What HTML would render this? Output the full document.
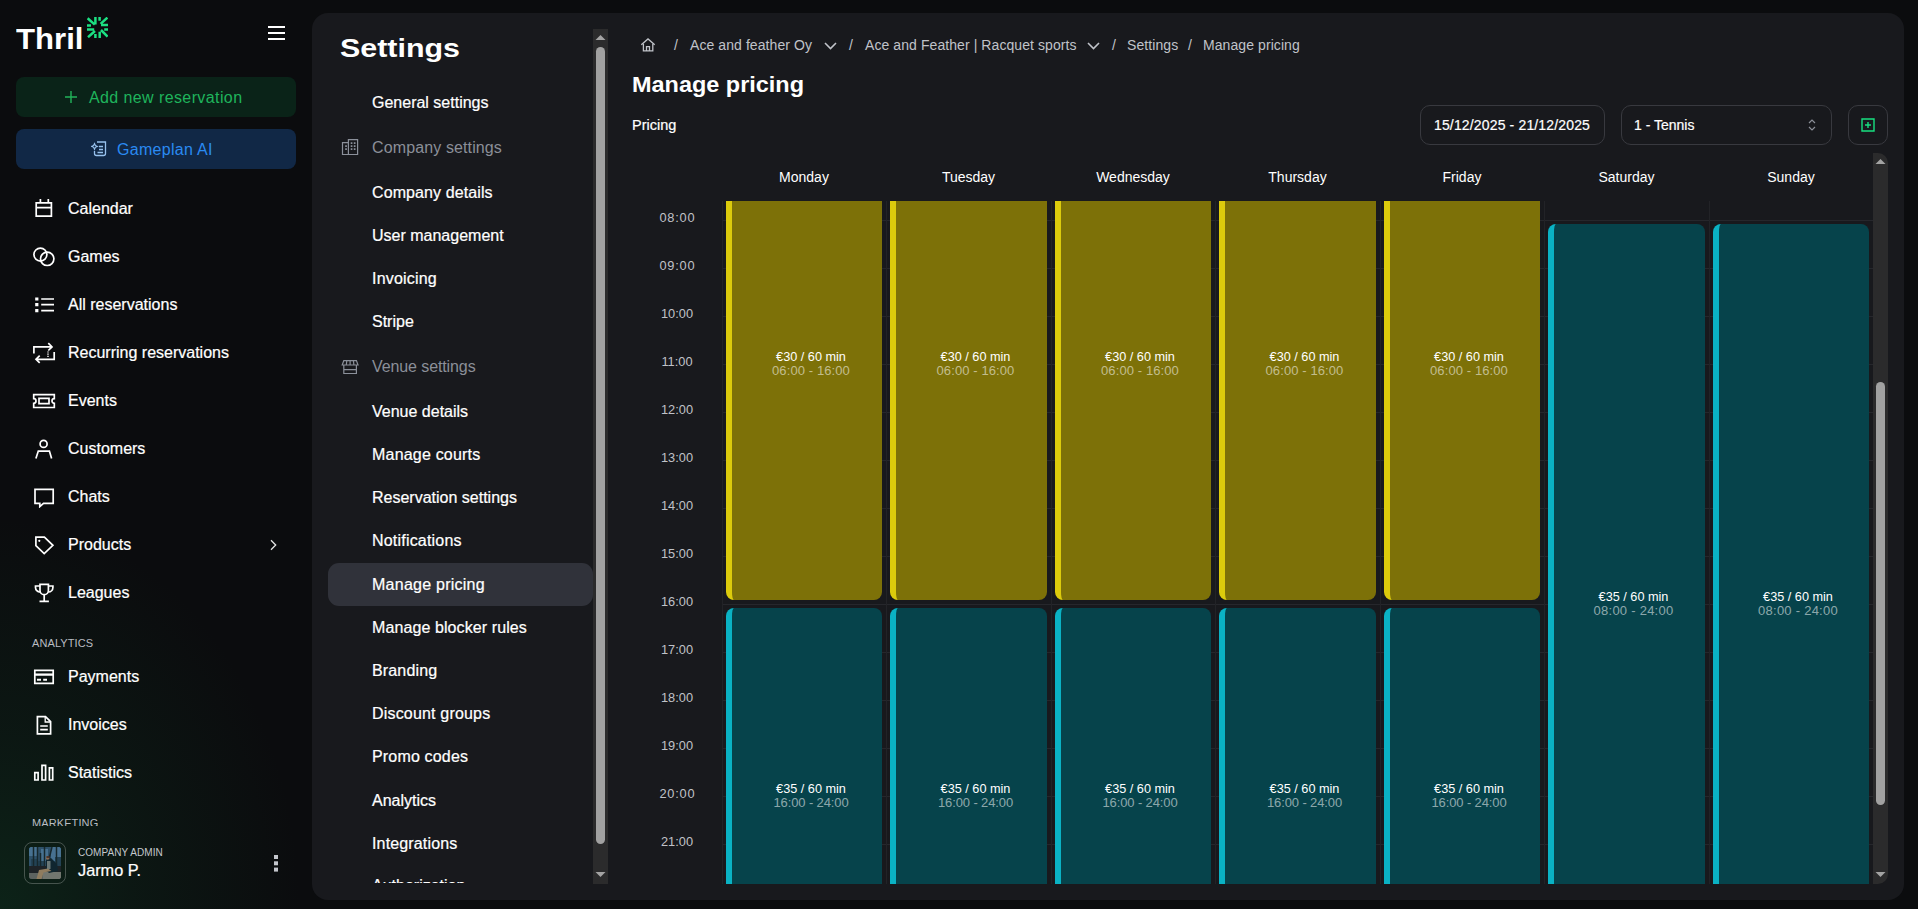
<!DOCTYPE html><html lang="en"><head><meta charset="utf-8"><title>Manage pricing</title><style>
*{box-sizing:border-box;margin:0;padding:0}
html,body{width:1918px;height:909px;overflow:hidden;background:#0b0c0e;}
body{font-family:"Liberation Sans",sans-serif;color:#fff;position:relative;-webkit-font-smoothing:antialiased}
.abs{position:absolute}
.t{position:absolute;white-space:nowrap;line-height:1;}
#glow{position:absolute;left:0;top:0;width:312px;height:909px;background:radial-gradient(ellipse 300px 390px at 0px 909px, rgba(14,66,38,.42), rgba(14,66,38,.2) 45%, rgba(11,12,14,0) 100%);}
#panel{position:absolute;left:312px;top:13px;width:1592px;height:887px;background:#18191d;border-radius:16px;}
.nav{position:absolute;left:68px;font-size:16px;color:#fff;white-space:nowrap;line-height:20px;height:20px;-webkit-text-stroke:.22px #fff}
.navi{position:absolute;left:32px;width:24px;height:24px}
.sec{position:absolute;left:32px;font-size:11px;color:#b9bcc2;letter-spacing:.1px;line-height:12px;white-space:nowrap}
.si{position:absolute;left:372px;font-size:16px;color:#fff;white-space:nowrap;line-height:20px;height:20px;-webkit-text-stroke:.22px #fff}
.sg{position:absolute;left:372px;font-size:16px;color:#8b8f98;white-space:nowrap;line-height:20px;height:20px}
.bc{position:absolute;top:37px;font-size:14px;line-height:16px;color:#c0c3c9;white-space:nowrap;letter-spacing:.08px}
.day{position:absolute;top:169px;width:164px;text-align:center;font-size:14px;line-height:16px;color:#fff;white-space:nowrap}
.hr{position:absolute;left:647px;width:60px;text-align:center;font-size:12.800px;line-height:16px;color:#c0c2c8;white-space:nowrap}
.hl{position:absolute;left:722px;width:1152px;height:1px;background:#26272c}
.vl{position:absolute;top:201px;width:1px;height:683px;background:#222327}
.blk{position:absolute;width:156px;overflow:hidden}
.blk.y{background:#7d7108;border-left:6px solid #dccb0c}
.blk.c{background:#06434b;border-left:6px solid #0ab2c4}
.bt{position:absolute;width:164px;text-align:center;font-size:13px;line-height:14px;white-space:nowrap}
.bt b{font-weight:400;color:#fff;display:block;font-size:12.700px}
.bt i{font-style:normal;color:rgba(255,255,255,.55);display:block;letter-spacing:.3px}
</style></head><body>
<div id="glow"></div>
<div class="t" style="left:16px;top:23px;font-size:29.5px;font-weight:700;line-height:32px;transform-origin:0 50%;transform:scaleX(1.055)">Thril</div>
<svg class="abs" style="left:87px;top:17px" width="21" height="21" viewBox="0 0 21 21" fill="none" stroke="#1ce182" stroke-width="2.500">
<path d="M0.600 1.300L7.800 7.600M8.400 0v7.600M0 8.600h4"/><path d="M20.400 0.600L13.600 6.800M14 8.100h7M12.600 0v3.700"/><path d="M20.600 19.600L14 13M12.700 14.800V21M17.200 12.600H21"/><path d="M1 20.200L8 14M0 12.600h7.200M8.400 17v4"/></svg>
<div class="abs" style="left:267.5px;top:25.800px;width:17px;height:2.400px;background:#fff;box-shadow:0 6px 0 #fff,0 12px 0 #fff"></div>
<div class="abs" style="left:16px;top:77px;width:280px;height:40px;border-radius:8px;background:#0a2318"></div>
<div class="t" style="left:89px;top:89px;font-size:16px;line-height:18px;color:#1fb45c;letter-spacing:.4px">Add new reservation</div>
<svg class="abs" style="left:64px;top:90px" width="14" height="14" viewBox="0 0 14 14" stroke="#22b45a" stroke-width="1.4" fill="none"><path d="M7 1v12M1 7h12"/></svg>
<div class="abs" style="left:16px;top:129px;width:280px;height:40px;border-radius:8px;background:#112846"></div>
<div class="t" style="left:117px;top:141px;font-size:16px;line-height:18px;color:#2a8af2;letter-spacing:.3px">Gameplan AI</div>
<svg class="abs" style="left:91px;top:140px" width="17" height="17" viewBox="0 0 17 17" fill="none" stroke="#97c1ed" stroke-width="1.3">
<path d="M6 2h8.5v11.5a2 2 0 0 1-2 2H5.5a2 2 0 0 1-2-2V11"/><path d="M8 6.5h4M8 9.5h4M6.5 12.5h5.5"/><path d="M3.5 3.5l.9 2 2 .9-2 .9-.9 2-.9-2-2-.9 2-.9z" stroke-width="1.1"/></svg>
<svg class="navi" style="top:196px" viewBox="0 0 24 24" fill="none" stroke="#fff" stroke-width="1.7"><path d="M4.2 6.8h15.2v13.4H4.2z"/><path d="M4.2 11.6h15.2M8.4 3v4M16.3 3v4"/></svg>
<div class="nav" style="top:199px">Calendar</div>
<svg class="navi" style="top:244px" viewBox="0 0 24 24" fill="none" stroke="#fff" stroke-width="1.7"><circle cx="8.4" cy="10.6" r="6.5"/><circle cx="15.2" cy="14.8" r="6.7"/></svg>
<div class="nav" style="top:247px">Games</div>
<svg class="navi" style="top:292px" viewBox="0 0 24 24" fill="none" stroke="#fff" stroke-width="1.7"><path d="M9.2 7h12.8M9.2 12.6h12.8M9.2 18.6h12.8"/><path d="M3.2 5.4h3.2v3.2H3.2zM3.2 11h3.2v3.2H3.2zM3.2 17h3.2v3.2H3.2z" fill="#fff" stroke="none"/></svg>
<div class="nav" style="top:295px">All reservations</div>
<svg class="navi" style="top:340px" viewBox="0 0 24 24" fill="none" stroke="#fff" stroke-width="1.7"><path d="M1.9 13.6V6.9h17.6M16.3 3.1l3.7 3.8-3.7 3.6"/><path d="M22.2 12.1v7.2H4.5M7.7 15.7l-3.7 3.6 3.7 3.6"/><path d="M16 11.4v5.8" stroke-dasharray="1.2 1" stroke-width="1.4"/></svg>
<div class="nav" style="top:343px">Recurring reservations</div>
<svg class="navi" style="top:388px" viewBox="0 0 24 24" fill="none" stroke="#fff" stroke-width="1.7"><path d="M1.7 6.7h20.6v4a2.3 2.3 0 0 0 0 4.6v4.2H1.7v-4.200a2.3 2.3 0 0 0 0-4.600z"/><path d="M7 10.300h10v5.400H7z"/></svg>
<div class="nav" style="top:391px">Events</div>
<svg class="navi" style="top:436px" viewBox="0 0 24 24" fill="none" stroke="#fff" stroke-width="1.7"><circle cx="11.600" cy="7.900" r="3.500"/><path d="M3.900 22.600l2.400-7.500h11.100l2.200 7.500"/></svg>
<div class="nav" style="top:439px">Customers</div>
<svg class="navi" style="top:484px" viewBox="0 0 24 24" fill="none" stroke="#fff" stroke-width="1.7"><path d="M3 5.400h18.200v13.900h-9.700l-3.700 3.300v-3.300H3z"/></svg>
<div class="nav" style="top:487px">Chats</div>
<svg class="navi" style="top:532px" viewBox="0 0 24 24" fill="none" stroke="#fff" stroke-width="1.7"><path d="M3.900 5.200h8.500l8.500 8.100-8.700 8.300-8.300-8z"/><circle cx="7.300" cy="8.800" r="1.100" fill="#fff" stroke="none"/></svg>
<div class="nav" style="top:535px">Products</div>
<svg class="navi" style="top:580px" viewBox="0 0 24 24" fill="none" stroke="#fff" stroke-width="1.7"><path d="M8 4.300h8.400v6.200a4.200 4.200 0 0 1-8.400 0z"/><path d="M8 6H3.500v1.500a4.500 4.500 0 0 0 4.500 4.500M16.400 6h4.500v1.500a4.500 4.500 0 0 1-4.500 4.500M12.200 14.900V21M7.500 21.300h9.400"/></svg>
<div class="nav" style="top:583px">Leagues</div>
<svg class="navi" style="top:664px" viewBox="0 0 24 24" fill="none" stroke="#fff" stroke-width="1.7"><path d="M2.800 6.400h18.400v13H2.800z"/><path d="M2.800 10.600h18.400" stroke-width="2.300"/><path d="M5 15.700h4M11.200 15.700h3.800" stroke-width="2"/></svg>
<div class="nav" style="top:667px">Payments</div>
<svg class="navi" style="top:712px" viewBox="0 0 24 24" fill="none" stroke="#fff" stroke-width="1.7"><path d="M5.400 4.600h8.100l5.100 5.100v12.200H5.400z"/><path d="M13.200 4.800v5.200h5.200" stroke-width="1.300"/><path d="M8.200 14h7.600M8.200 17.600h7.600"/></svg>
<div class="nav" style="top:715px">Invoices</div>
<svg class="navi" style="top:760px" viewBox="0 0 24 24" fill="none" stroke="#fff" stroke-width="1.7"><path d="M2.800 12.700h3.300V20H2.800zM10 5.300h3.600V20H10zM17.400 7.800h3.300V20h-3.300z"/></svg>
<div class="nav" style="top:763px">Statistics</div>
<svg class="abs" style="left:266.500px;top:539px" width="12" height="12" viewBox="0 0 12 12" fill="none" stroke="#e6e6e6" stroke-width="1.300"><path d="M4 1.300l4.700 4.700L4 10.700"/></svg>
<div class="sec" style="top:637px">ANALYTICS</div>
<div class="abs" style="left:32px;top:817px;height:8.6px;overflow:hidden"><div class="sec" style="position:static">MARKETING</div></div>
<div class="abs" style="left:24px;top:842px;width:42px;height:42px;border-radius:8px;border:1px solid rgba(255,255,255,.24)"></div>
<svg class="abs" style="left:29px;top:847px;border-radius:3px" width="32" height="32" viewBox="0 0 32 32">
<rect width="32" height="32" fill="#3c6787"/>
<path d="M0 0h9v9H0zM12 2h7v12h-7zM22 0h10v14H22z" fill="#5f94bd"/>
<path d="M2 12h6v8H2zM9 14h6v6H9zM26 10h6v9h-6z" fill="#2d5269"/>
<path d="M4.500 0v22M8.500 0v21M15.500 0v22M11.500 6v15M27.500 0v20M23 0l-3 12" stroke="#1c2e33" stroke-width="1.500" fill="none"/>
<rect y="19" width="32" height="13" fill="#26282a"/>
<path d="M0 26h32v6H0z" fill="#7d8079"/><path d="M14 25h18v7H14z" fill="#9a9a8e"/>
<path d="M17 12.500l5-1.500 6 6 1 7-9 2-3-3z" fill="#122c36"/>
<path d="M18 14h3.500v8H18z" fill="#8f9c98"/>
<circle cx="18.700" cy="10.800" r="1.900" fill="#b88a6b"/><path d="M17.500 9.200h3.500v1.500h-3.500z" fill="#4f2c1e"/>
<path d="M19 21.500l-9 1.500-2.500 9h5l2-6.500 8-1.500z" fill="#c2a278"/>
<rect width="32" height="32" fill="#0a1a22" fill-opacity=".28"/>
</svg>
<div class="t" style="left:78px;top:847px;font-size:10px;line-height:12px;color:#c5c8cd;letter-spacing:.05px">COMPANY ADMIN</div>
<div class="t" style="left:78px;top:860px;font-size:16.3px;line-height:20px;color:#fff;-webkit-text-stroke:.22px #fff">Jarmo P.</div>
<div class="abs" style="left:274px;top:855px;width:4px;height:4px;background:#c4c6cc;box-shadow:0 6.3px 0 #c4c6cc,0 12.6px 0 #c4c6cc"></div>
<div id="panel"></div>
<div class="t" style="left:340px;top:32px;font-size:26px;font-weight:700;line-height:32px;transform-origin:0 50%;transform:scaleX(1.17)">Settings</div>
<div class="abs" style="left:328px;top:563px;width:265px;height:43px;border-radius:11px;background:#30323a"></div>
<div class="si" style="top:93px">General settings</div>
<div class="sg" style="top:138px;letter-spacing:0.12px">Company settings</div>
<div class="si" style="top:183px;letter-spacing:0.1px">Company details</div>
<div class="si" style="top:226px">User management</div>
<div class="si" style="top:269px;letter-spacing:0.2px">Invoicing</div>
<div class="si" style="top:312px">Stripe</div>
<div class="sg" style="top:357px;letter-spacing:-0.1px">Venue settings</div>
<div class="si" style="top:402px">Venue details</div>
<div class="si" style="top:445px;letter-spacing:0.2px">Manage courts</div>
<div class="si" style="top:488px">Reservation settings</div>
<div class="si" style="top:531px;letter-spacing:0.2px">Notifications</div>
<div class="si" style="top:575px;letter-spacing:0.25px">Manage pricing</div>
<div class="si" style="top:618px;letter-spacing:0.1px">Manage blocker rules</div>
<div class="si" style="top:661px;letter-spacing:0.15px">Branding</div>
<div class="si" style="top:704px;letter-spacing:0.18px">Discount groups</div>
<div class="si" style="top:747px;letter-spacing:0.17px">Promo codes</div>
<div class="si" style="top:791px">Analytics</div>
<div class="si" style="top:834px;letter-spacing:0.15px">Integrations</div>
<div class="abs" style="left:372px;top:876px;height:6.600px;overflow:hidden"><div class="si" style="position:static">Authorization</div></div>
<svg class="abs" style="left:341px;top:139px" width="18" height="17" viewBox="0 0 18 17" fill="none" stroke="#8b909a" stroke-width="1.200"><path d="M1.500 3.600h5.900v11.900H1.500zM7.400 0.600h9.200v14.900H7.400z"/><path d="M4.200 7.100h1.700M4.200 10.100h1.700M9.700 4.100h1.700M12.800 4.100h1.700M9.700 7.100h1.700M12.800 7.100h1.700M9.700 10.100h1.700M12.800 10.100h1.700" stroke-width="1.800"/></svg>
<svg class="abs" style="left:341px;top:359px" width="18" height="16" viewBox="0 0 18 16" fill="none" stroke="#8b909a" stroke-width="1.200"><path d="M2.800 1.600h12.600L17 6H1.200z"/><path d="M2.800 6v8.500h12.600V6M2.800 10.600h12.600"/><path d="M5.800 1.600L5.300 6M9.100 1.600V6M12.400 1.600l.5 4.400"/></svg>
<div class="abs" style="left:593px;top:29px;width:15px;height:855px;background:#2b2b2c"></div>
<div class="abs" style="left:596px;top:47px;width:9px;height:797px;border-radius:5px;background:#a1a1a1"></div>
<svg class="abs" style="left:595px;top:34px" width="11" height="7" viewBox="0 0 11 7"><path d="M0.5 6L5.5 1l5 5z" fill="#a3a3a3"/></svg>
<svg class="abs" style="left:595px;top:871px" width="11" height="7" viewBox="0 0 11 7"><path d="M0.5 1L5.5 6l5-5z" fill="#a3a3a3"/></svg>
<svg class="abs" style="left:640px;top:37px" width="16" height="16" viewBox="0 0 16 16" fill="none" stroke="#c0c3c9" stroke-width="1.300"><path d="M1.300 7.800L8 1.900l6.700 5.900"/><path d="M3.400 6.800v7.100h9.400V6.800"/><path d="M6.500 13.900V9.700h3v4.200"/></svg>
<div class="bc" style="left:674px">/</div>
<div class="bc" style="left:690px">Ace and feather Oy</div>
<div class="bc" style="left:849px">/</div>
<div class="bc" style="left:865px">Ace and Feather | Racquet sports</div>
<div class="bc" style="left:1112px">/</div>
<div class="bc" style="left:1127px">Settings</div>
<div class="bc" style="left:1188px">/</div>
<div class="bc" style="left:1203px">Manage pricing</div>
<svg class="abs" style="left:824px;top:41.700px" width="13" height="8" viewBox="0 0 13 8" fill="none" stroke="#c0c3c9" stroke-width="1.600"><path d="M1 1l5.5 5.5L12 1"/></svg>
<svg class="abs" style="left:1087px;top:41.700px" width="13" height="8" viewBox="0 0 13 8" fill="none" stroke="#c0c3c9" stroke-width="1.600"><path d="M1 1l5.5 5.5L12 1"/></svg>
<div class="t" style="left:632px;top:71px;font-size:22px;font-weight:700;line-height:28px;transform-origin:0 50%;transform:scaleX(1.066)">Manage pricing</div>
<div class="t" style="left:632px;top:116px;font-size:14.5px;line-height:18px;-webkit-text-stroke:.2px #fff">Pricing</div>
<div class="abs" style="left:1420px;top:105px;width:185px;height:40px;border:1px solid #38393f;border-radius:10px"></div>
<div class="t" style="left:1434px;top:116px;font-size:14px;line-height:18px;letter-spacing:.15px;-webkit-text-stroke:.2px #fff">15/12/2025 - 21/12/2025</div>
<div class="abs" style="left:1621px;top:105px;width:211px;height:40px;border:1px solid #38393f;border-radius:10px"></div>
<div class="t" style="left:1634px;top:116px;font-size:14px;line-height:18px;-webkit-text-stroke:.2px #fff">1 - Tennis</div>
<svg class="abs" style="left:1807px;top:118px" width="10" height="14" viewBox="0 0 10 14" fill="none" stroke="#8b8f98" stroke-width="1.2"><path d="M2 5l3-3 3 3M2 9l3 3 3-3"/></svg>
<div class="abs" style="left:1848px;top:105px;width:40px;height:40px;border:1px solid #38393f;border-radius:10px"></div>
<svg class="abs" style="left:1861px;top:118px" width="14" height="14" viewBox="0 0 14 14" fill="none" stroke="#17e080" stroke-width="1.400"><path d="M1 1h12v12H1z"/><path d="M7 4v6M4 7h6"/></svg>
<div class="day" style="left:722.0px">Monday</div>
<div class="day" style="left:886.5px">Tuesday</div>
<div class="day" style="left:1051.0px">Wednesday</div>
<div class="day" style="left:1215.5px">Thursday</div>
<div class="day" style="left:1380.0px">Friday</div>
<div class="day" style="left:1544.5px">Saturday</div>
<div class="day" style="left:1709.0px">Sunday</div>
<div class="hl" style="top:220px"></div>
<div class="hl" style="top:268px"></div>
<div class="hl" style="top:316px"></div>
<div class="hl" style="top:364px"></div>
<div class="hl" style="top:412px"></div>
<div class="hl" style="top:460px"></div>
<div class="hl" style="top:508px"></div>
<div class="hl" style="top:556px"></div>
<div class="hl" style="top:604px"></div>
<div class="hl" style="top:652px"></div>
<div class="hl" style="top:700px"></div>
<div class="hl" style="top:748px"></div>
<div class="hl" style="top:796px"></div>
<div class="hl" style="top:844px"></div>
<div class="vl" style="left:722px"></div>
<div class="vl" style="left:886px"></div>
<div class="vl" style="left:1051px"></div>
<div class="vl" style="left:1215px"></div>
<div class="vl" style="left:1380px"></div>
<div class="vl" style="left:1544px"></div>
<div class="vl" style="left:1709px"></div>
<div class="vl" style="left:1873px"></div>
<div class="hr" style="top:210px;letter-spacing:.8px;text-indent:.8px">08:00</div>
<div class="hr" style="top:258px;letter-spacing:.8px;text-indent:.8px">09:00</div>
<div class="hr" style="top:306px">10:00</div>
<div class="hr" style="top:354px">11:00</div>
<div class="hr" style="top:402px">12:00</div>
<div class="hr" style="top:450px">13:00</div>
<div class="hr" style="top:498px">14:00</div>
<div class="hr" style="top:546px">15:00</div>
<div class="hr" style="top:594px">16:00</div>
<div class="hr" style="top:642px">17:00</div>
<div class="hr" style="top:690px">18:00</div>
<div class="hr" style="top:738px">19:00</div>
<div class="hr" style="top:786px;letter-spacing:.8px;text-indent:.8px">20:00</div>
<div class="hr" style="top:834px">21:00</div>
<div class="blk y" style="left:726px;width:156px;top:201px;height:399px;border-radius:0 0 8px 8px"></div>
<div class="bt" style="left:729.0px;top:350px"><b>€30 / 60 min</b><i style="letter-spacing:.1px">06:00 - 16:00</i></div>
<div class="blk c" style="left:726px;width:156px;top:608px;height:276px;border-radius:8px 8px 0 0"></div>
<div class="bt" style="left:729.0px;top:782px"><b>€35 / 60 min</b><i style="letter-spacing:-.12px">16:00 - 24:00</i></div>
<div class="blk y" style="left:890px;width:157px;top:201px;height:399px;border-radius:0 0 8px 8px"></div>
<div class="bt" style="left:893.5px;top:350px"><b>€30 / 60 min</b><i style="letter-spacing:.1px">06:00 - 16:00</i></div>
<div class="blk c" style="left:890px;width:157px;top:608px;height:276px;border-radius:8px 8px 0 0"></div>
<div class="bt" style="left:893.5px;top:782px"><b>€35 / 60 min</b><i style="letter-spacing:-.12px">16:00 - 24:00</i></div>
<div class="blk y" style="left:1055px;width:156px;top:201px;height:399px;border-radius:0 0 8px 8px"></div>
<div class="bt" style="left:1058.0px;top:350px"><b>€30 / 60 min</b><i style="letter-spacing:.1px">06:00 - 16:00</i></div>
<div class="blk c" style="left:1055px;width:156px;top:608px;height:276px;border-radius:8px 8px 0 0"></div>
<div class="bt" style="left:1058.0px;top:782px"><b>€35 / 60 min</b><i style="letter-spacing:-.12px">16:00 - 24:00</i></div>
<div class="blk y" style="left:1219px;width:157px;top:201px;height:399px;border-radius:0 0 8px 8px"></div>
<div class="bt" style="left:1222.5px;top:350px"><b>€30 / 60 min</b><i style="letter-spacing:.1px">06:00 - 16:00</i></div>
<div class="blk c" style="left:1219px;width:157px;top:608px;height:276px;border-radius:8px 8px 0 0"></div>
<div class="bt" style="left:1222.5px;top:782px"><b>€35 / 60 min</b><i style="letter-spacing:-.12px">16:00 - 24:00</i></div>
<div class="blk y" style="left:1384px;width:156px;top:201px;height:399px;border-radius:0 0 8px 8px"></div>
<div class="bt" style="left:1387.0px;top:350px"><b>€30 / 60 min</b><i style="letter-spacing:.1px">06:00 - 16:00</i></div>
<div class="blk c" style="left:1384px;width:156px;top:608px;height:276px;border-radius:8px 8px 0 0"></div>
<div class="bt" style="left:1387.0px;top:782px"><b>€35 / 60 min</b><i style="letter-spacing:-.12px">16:00 - 24:00</i></div>
<div class="blk c" style="left:1548px;width:157px;top:224px;height:660px;border-radius:8px 8px 0 0"></div>
<div class="bt" style="left:1551.5px;top:590px"><b>€35 / 60 min</b><i style="letter-spacing:.25px">08:00 - 24:00</i></div>
<div class="blk c" style="left:1713px;width:156px;top:224px;height:660px;border-radius:8px 8px 0 0"></div>
<div class="bt" style="left:1716.0px;top:590px"><b>€35 / 60 min</b><i style="letter-spacing:.25px">08:00 - 24:00</i></div>
<div class="abs" style="left:1873px;top:153px;width:15px;height:731px;background:#2b2b2c;border-radius:0 10px 10px 0"></div>
<div class="abs" style="left:1876px;top:382px;width:9px;height:423px;border-radius:5px;background:#a1a1a1"></div>
<svg class="abs" style="left:1875px;top:158px" width="11" height="7" viewBox="0 0 11 7"><path d="M0.5 6L5.5 1l5 5z" fill="#a3a3a3"/></svg>
<svg class="abs" style="left:1875px;top:871px" width="11" height="7" viewBox="0 0 11 7"><path d="M0.5 1L5.5 6l5-5z" fill="#a3a3a3"/></svg>
</body></html>
